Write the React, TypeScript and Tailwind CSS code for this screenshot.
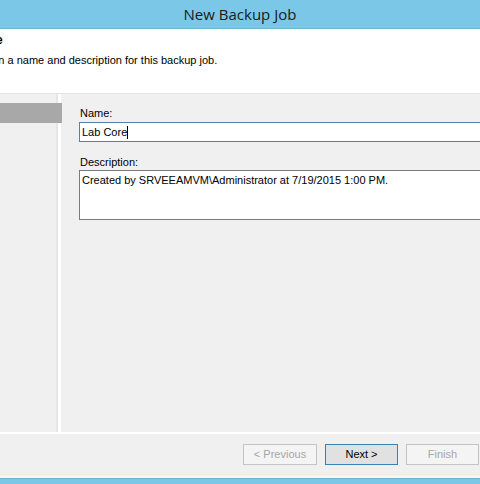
import React from 'react';

const font = { fontFamily: '"Liberation Sans", Arial, sans-serif' };

export default function App() {
  return (
    <div className="w-[480px] h-[484px] flex flex-col overflow-hidden bg-[#f0f0f0] text-black" style={font}>
      {/* title bar */}
      <div className="h-[29px] shrink-0 bg-[#7ac7e7] border-b border-[#6fb3d0] flex items-center justify-center">
        <span className="text-[15px] text-[#1a1a1a] pt-[1px]" style={{ fontFamily: '"Open Sans", "Noto Sans", sans-serif' }}>
          New Backup Job
        </span>
      </div>

      {/* header */}
      <div className="h-[65px] shrink-0 bg-white border-b border-[#e3e3e3] overflow-hidden">
        <div className="ml-[-30px] pt-[4px] flex flex-col">
          <span className="text-[12px] font-bold leading-[15px]">Name</span>
          <span className="text-[11px] leading-[14px] mt-[5px] ml-[-1px]">Type in a name and description for this backup job.</span>
        </div>
      </div>

      {/* body */}
      <div className="flex-1 flex min-h-0">
        <div className="w-[58px] shrink-0 flex flex-col border-r-2 border-[#e6e6e6] pt-[9px]">
          <div className="h-[20px] w-[62px] bg-[#a8a8a8] relative z-10" />
        </div>
        <div className="w-[3px] shrink-0 bg-white" />
        <div className="flex-1 pl-[18px] pt-[12px] flex flex-col">
          <label className="text-[11px] leading-[14px] mb-[2px] ml-[1px]">Name:</label>
          <div className="h-[20px] border border-[#5a7ea8] bg-white mr-[-4px] flex items-center px-[2px]">
            <span className="text-[11px] leading-none">Lab Core</span>
            <span className="w-px h-[13px] bg-black" />
          </div>
          <label className="text-[11px] leading-[14px] mt-[13px] mb-[1px] ml-[1px]">Description:</label>
          <div className="h-[50px] border border-[#7a7a7a] bg-white mr-[-4px] px-[2px] pt-[3px] text-[11px] leading-[13px]">
            <span className="whitespace-nowrap">Created by SRVEEAMVM\Administrator at 7/19/2015 1:00 PM.</span>
          </div>
        </div>
      </div>

      {/* footer */}
      <div className="h-[46px] shrink-0 border-t-2 border-white flex flex-col">
        <div className="flex-1 flex justify-end items-start pt-[10px] pr-[1px] gap-[8px]">
          <button className="w-[74px] h-[21px] border border-[#c4c4c4] bg-[#f4f4f4] text-[11px] text-[#a6a6a6]">
            &lt; Previous
          </button>
          <button className="w-[73px] h-[21px] border border-[#3c7fb1] bg-[#e1e1e1] text-[11px] text-black">
            Next &gt;
          </button>
          <button className="w-[73px] h-[21px] border border-[#c4c4c4] bg-[#f4f4f4] text-[11px] text-[#a6a6a6]">
            Finish
          </button>
        </div>
        <div className="h-[2px] bg-[#f7f7f7]" />
      </div>
      <div className="h-[6px] shrink-0 bg-[#7ac7e7] border-t border-[#6fb3d0]" />
    </div>
  );
}
